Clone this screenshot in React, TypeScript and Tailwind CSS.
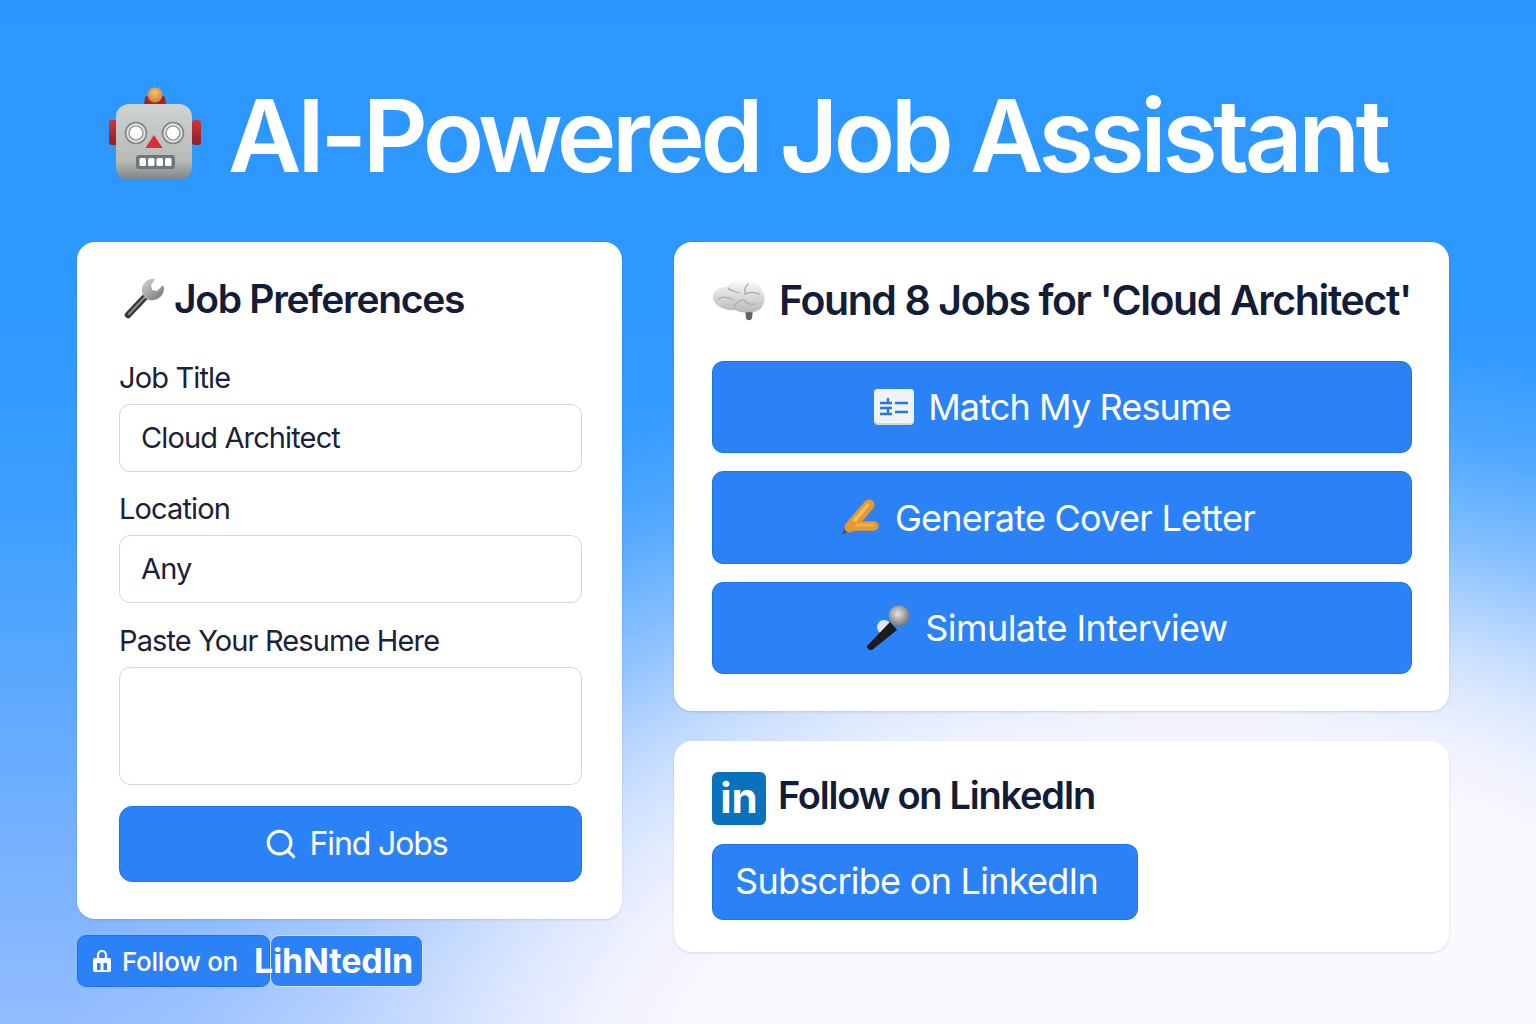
import { Search } from "lucide-react";

const RobotIcon = () => (
  <svg className="shrink-0" width="94" height="94" viewBox="0 0 94 94">
    <defs>
      <linearGradient id="robotFace" x1="0" y1="0" x2="0" y2="1">
        <stop offset="0" stopColor="#d0d3d2" />
        <stop offset="0.75" stopColor="#b6bbb4" />
        <stop offset="1" stopColor="#7d8288" />
      </linearGradient>
      <radialGradient id="robotKnob" cx="0.5" cy="0.35" r="0.7">
        <stop offset="0" stopColor="#f3c178" />
        <stop offset="1" stopColor="#c77f2e" />
      </radialGradient>
      <linearGradient id="robotEar" x1="0" y1="0" x2="0" y2="1">
        <stop offset="0" stopColor="#d0343a" />
        <stop offset="1" stopColor="#8e1f27" />
      </linearGradient>
    </defs>
    <rect x="1" y="33" width="9" height="25" rx="3" fill="url(#robotEar)" />
    <rect x="84" y="33" width="9" height="25" rx="3" fill="url(#robotEar)" />
    <path d="M37 10c5-3 15-3 20 0l1 7-11 7-11-7z" fill="#a3242b" />
    <circle cx="47" cy="8" r="7.500" fill="url(#robotKnob)" />
    <rect x="8" y="17" width="76" height="76" rx="13" fill="url(#robotFace)" />
    <circle cx="28" cy="46" r="10.500" fill="#dfe1e0" stroke="#7f8488" strokeWidth="1.600" />
    <circle cx="28" cy="46" r="7" fill="#fff" stroke="#80858a" strokeWidth="1.200" />
    <circle cx="65" cy="46" r="10.500" fill="#dfe1e0" stroke="#7f8488" strokeWidth="1.600" />
    <circle cx="65" cy="46" r="7" fill="#fff" stroke="#80858a" strokeWidth="1.200" />
    <path d="M46 48l8.500 13h-17z" fill="#d92e36" />
    <rect x="28" y="68" width="39" height="14" rx="3" fill="#70767d" />
    <rect x="31.500" y="71" width="6.500" height="8" rx="1.500" fill="#fff" />
    <rect x="40" y="71" width="6.500" height="8" rx="1.500" fill="#fff" />
    <rect x="48.500" y="71" width="6.500" height="8" rx="1.500" fill="#fff" />
    <rect x="57" y="71" width="6.500" height="8" rx="1.500" fill="#fff" />
  </svg>
);

const WrenchIcon = () => (
  <svg className="ml-[3px] shrink-0" width="44" height="42" viewBox="0 0 44 42">
    <defs>
      <linearGradient id="wrenchHead" x1="0" y1="0" x2="1" y2="1">
        <stop offset="0" stopColor="#d5d6d8" />
        <stop offset="1" stopColor="#6f7276" />
      </linearGradient>
    </defs>
    <path d="M6 37L24 18" stroke="#33373b" strokeWidth="6.500" strokeLinecap="round" />
    <path d="M7 36L23 19" stroke="#888c90" strokeWidth="2" strokeLinecap="round" />
    <path
      d="M33 1c-7-1-13 4-13 11 0 3 1 6 3 8 3 2 6 3 9 2 6-1 10-6 10-12l-1-3-6 6-5-1-1-5z"
      fill="url(#wrenchHead)"
    />
  </svg>
);

const BrainIcon = () => (
  <svg className="shrink-0" width="54" height="44" viewBox="0 0 54 44">
    <defs>
      <linearGradient id="brainFill" x1="0" y1="0" x2="0" y2="1">
        <stop offset="0" stopColor="#fafafa" />
        <stop offset="1" stopColor="#b9b9b9" />
      </linearGradient>
    </defs>
    <path d="M33 30l8 0-1 9c-1 3-5 3-6 0z" fill="#5e6468" />
    <path
      d="M1 20C0 13 7 7 14 8c4-6 14-8 21-5 5-2 12 1 14 6 3 5 5 11 2 17-2 5-8 8-14 7-5 1-10 0-14-2-6 1-13-1-18-5-2-2-3-4-4-6z"
      fill="url(#brainFill)"
    />
    <path
      d="M16 9c2 3 7 3 11 5M6 20c5-3 11-2 15 1M36 5c-3 3-4 6-3 10 4-2 10-2 14 0M22 30c0-5 4-9 10-9 2 3 6 5 11 4"
      fill="none"
      stroke="#b0b0b0"
      strokeWidth="1.400"
      strokeLinecap="round"
    />
  </svg>
);

const CardIcon = () => (
  <svg className="shrink-0" width="42" height="38" viewBox="0 0 42 38">
    <rect x="1" y="1" width="40" height="36" rx="4" fill="#d5d6d7" />
    <rect x="1" y="1" width="40" height="34" rx="4" fill="#f1f2f3" />
    <path
      d="M7 15h12M7 20h12M7 26h12M15 10v5M15 20v6M22 15h13M22 24h13"
      stroke="#2176e8"
      strokeWidth="2.400"
      fill="none"
    />
  </svg>
);

const PencilIcon = () => (
  <svg className="shrink-0" width="40" height="38" viewBox="0 0 40 38">
    <path d="M1 36l3-8 5 4z" fill="#49586d" />
    <path d="M9 28L28 6" stroke="#e59a2c" strokeWidth="11" strokeLinecap="round" />
    <path d="M12 27H33" stroke="#e59a2c" strokeWidth="9.500" strokeLinecap="round" />
    <path d="M27 6L14 21" stroke="#f3bd62" strokeWidth="3.500" strokeLinecap="round" />
    <path d="M16 26H32" stroke="#f0b04a" strokeWidth="3" strokeLinecap="round" />
  </svg>
);

const MicIcon = () => (
  <svg className="shrink-0" width="46" height="46" viewBox="0 0 46 46">
    <defs>
      <radialGradient id="micHead" cx="0.45" cy="0.4" r="0.7">
        <stop offset="0" stopColor="#e4e4e4" />
        <stop offset="1" stopColor="#5f6060" />
      </radialGradient>
    </defs>
    <circle cx="18" cy="22" r="7" fill="#dfe6ef" />
    <path d="M1 41L24 17l7 8L6 45c-2 1-6-2-5-4z" fill="#1b1b1b" />
    <circle cx="33" cy="11" r="10.500" fill="url(#micHead)" />
  </svg>
);

const LockIcon = () => (
  <svg className="shrink-0" width="20" height="24" viewBox="0 0 20 24" fill="none">
    <path d="M6 9V6a4 4 0 0 1 8 0v3" stroke="#fff" strokeWidth="2.200" />
    <rect x="1" y="9" width="18" height="14" rx="2" fill="#fff" />
    <rect x="5" y="14" width="3.500" height="7" fill="#2a80f3" />
    <rect x="11.500" y="14" width="3.500" height="7" fill="#2a80f3" />
  </svg>
);

const ActionButton = ({ icon, label, extra }: { icon: React.ReactNode; label: string; extra: string }) => (
  <button className={`flex w-full items-center justify-center ${extra} rounded-[11px] border border-[#1a73ec] bg-[#2a82f6] text-[36px] text-white`}>
    {icon}
    <span>{label}</span>
  </button>
);

const Field = ({ label, value }: { label: string; value: string }) => (
  <div>
    <label className="block h-[32px] text-[29px] leading-[34px] tracking-[-0.03em] text-[#1a2238]">{label}</label>
    <div className="mt-[11px] flex h-[68px] items-center rounded-[11px] border border-[#d6d8dc] bg-white px-[21px] text-[29px] tracking-[-0.03em] text-[#1a2238]">
      {value}
    </div>
  </div>
);

export default function App() {
  return (
    <div className="h-[1024px] overflow-hidden bg-[radial-gradient(ellipse_1150px_800px_at_1200px_1124px,rgba(251,248,255,1)_0%,rgba(251,248,255,1)_45%,rgba(251,248,255,0.88)_55%,rgba(251,248,255,0.7)_63%,rgba(251,248,255,0.35)_76%,rgba(251,248,255,0.12)_88%,rgba(251,248,255,0)_100%),linear-gradient(180deg,#2b98ff_0%,#2e99ff_30%,#3c9eff_49%,#5ea9ff_68%,#93bcff_100%)] font-['Inter',sans-serif]">
      <header className="flex h-[242px] items-start pt-[87px] pl-[108px]">
        <RobotIcon />
        <h1 className="ml-[26px] text-[101px] leading-[96px] font-semibold tracking-[-0.045em] whitespace-nowrap text-white">
          AI-Powered Job Assistant
        </h1>
      </header>

      <main className="flex gap-[52px] pl-[77px]">
        <div className="w-[545px]">
          <section className="h-[677px] rounded-[18px] bg-white pt-[34px] pr-[40px] pl-[42px] shadow-sm">
            <div className="flex h-[46px] items-center gap-[8px]">
              <WrenchIcon />
              <h2 className="text-[39px] font-semibold tracking-[-0.033em] whitespace-nowrap text-[#141d38]">Job Preferences</h2>
            </div>
            <div className="mt-[39px] flex flex-col gap-[20px]">
              <Field label="Job Title" value="Cloud Architect" />
              <Field label="Location" value="Any" />
            </div>
            <div className="mt-[21px]">
              <label className="block h-[32px] text-[29px] leading-[34px] tracking-[-0.03em] text-[#1a2238]">Paste Your Resume Here</label>
              <div className="mt-[11px] h-[118px] rounded-[11px] border border-[#d6d8dc] bg-white" />
            </div>
            <button className="mt-[21px] flex h-[76px] w-full items-center justify-center gap-[12px] rounded-[13px] border border-[#1a73ec] bg-[#2a82f6] pl-[10px] text-[32px] tracking-[-0.035em] text-white">
              <Search size={34} strokeWidth={2.2} />
              <span>Find Jobs</span>
            </button>
          </section>
          <div className="mt-[16px] flex">
            <div className="flex h-[52px] w-[193px] items-center gap-[10px] rounded-[9px] border border-[#1a73ec] bg-[#2a82f6] pl-[14px] text-[26px] font-medium tracking-[-0.01em] whitespace-nowrap text-white">
              <LockIcon />
              <span className="mt-[1px]">Follow on</span>
            </div>
            <div className="flex h-[52px] w-[153px] items-center rounded-[9px] border border-[#d2e2fb] bg-[#2a82f6] pl-[1px] text-[34px] leading-none font-bold tracking-[-0.005em] whitespace-nowrap text-white [text-indent:-18px]">
              LihNtedIn
            </div>
          </div>
        </div>

        <div className="w-[775px]">
          <section className="h-[469px] rounded-[18px] bg-white pt-[36px] pr-[37px] pl-[38px] shadow-sm">
            <div className="flex h-[46px] items-center gap-[13px]">
              <BrainIcon />
              <h2 className="text-[41px] font-semibold tracking-[-0.034em] whitespace-nowrap text-[#141d38]">
                Found 8 Jobs for 'Cloud Architect'
              </h2>
            </div>
            <div className="mt-[37px] flex flex-col gap-[18px]">
              <ActionButton icon={<CardIcon />} label="Match My Resume" extra="h-[92px] gap-[13px] pr-[20px] tracking-[-0.024em]" />
              <ActionButton icon={<PencilIcon />} label="Generate Cover Letter" extra="h-[93px] gap-[14px] pr-[28px] tracking-[-0.021em]" />
              <ActionButton icon={<MicIcon />} label="Simulate Interview" extra="h-[92px] gap-[13px] pr-[30px] tracking-[-0.015em]" />
            </div>
          </section>
          <section className="mt-[30px] h-[211px] rounded-[18px] bg-white px-[38px] pt-[31px] shadow-sm">
            <div className="flex items-center gap-[12px]">
              <div className="flex h-[53px] w-[54px] items-end justify-center rounded-[6px] bg-[#0a72bd] pb-[2px] text-[42px] leading-[50px] font-bold text-white">
                in
              </div>
              <h2 className="-mt-[6px] text-[38px] font-semibold tracking-[-0.033em] text-[#141d38]">Follow on LinkedIn</h2>
            </div>
            <button className="mt-[19px] flex h-[76px] w-[426px] items-center rounded-[11px] border border-[#1a73ec] bg-[#2a82f6] pb-[2px] pl-[22px] text-[36px] tracking-[-0.02em] whitespace-nowrap text-white">
              Subscribe on LinkedIn
            </button>
          </section>
        </div>
      </main>
    </div>
  );
}
